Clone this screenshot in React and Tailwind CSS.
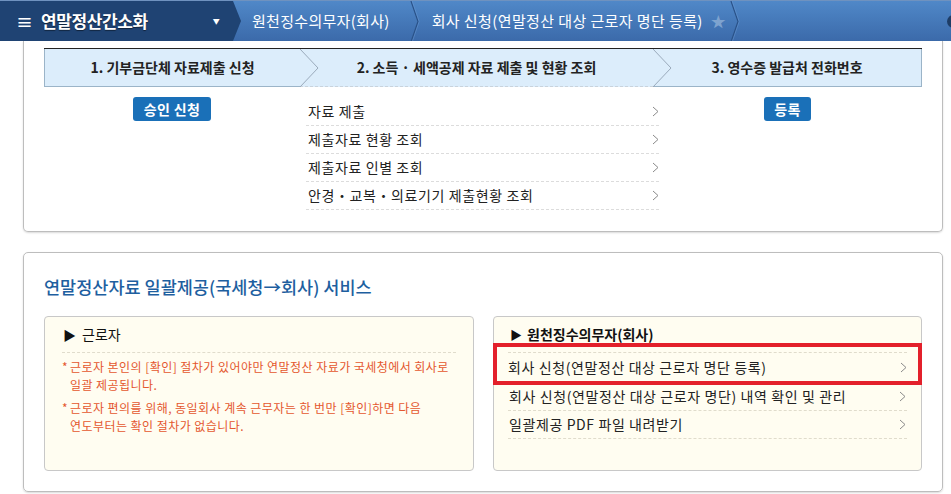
import React from "react";

const KR = { fontFamily: "'Noto Sans CJK KR', 'Noto Sans', sans-serif" };

const Chev = ({ className = "" }) => (
  <svg width="7" height="11" viewBox="0 0 7 11" className={className}>
    <path d="M1 1 L6 5.5 L1 10" fill="none" stroke="#8a8a8a" strokeWidth="1" />
  </svg>
);

const Sep = () => (
  <svg width="10" height="41" viewBox="0 0 10 41" className="shrink-0">
    <path d="M1 0 L8 20.5 L1 41" fill="none" stroke="#2a5288" strokeWidth="1.2" />
    <path d="M2.2 0 L9.2 20.5 L2.2 41" fill="none" stroke="#6b9ad3" strokeWidth="0.8" opacity="0.6" />
  </svg>
);

function TopBar() {
  return (
    <div className="h-[41px] flex items-stretch overflow-hidden border-t border-[#6f92bf] bg-gradient-to-b from-[#5088c8] to-[#3b6aaa]">
      <div className="w-[242px] shrink-0 flex items-center bg-[#1f4373] [clip-path:polygon(0_0,233px_0,241px_50%,233px_100%,0_100%)]">
        <span className="ml-[16px] text-white text-[17px] font-bold leading-none">≡</span>
        <span className="ml-[8px] text-white text-[17px] font-bold tracking-[-0.4px] [text-shadow:0_1px_1px_rgba(0,0,0,0.5)]">연말정산간소화</span>
        <span className="ml-[65px] text-white text-[7px]">▼</span>
      </div>
      <div className="flex items-center ml-[10px] text-[15px] tracking-[0.3px] text-white">원천징수의무자(회사)</div>
      <div className="ml-[20px] flex items-center"><Sep /></div>
      <div className="flex items-center ml-[12px] text-[15px] tracking-[0.4px] text-white">회사 신청(연말정산 대상 근로자 명단 등록)</div>
      <div className="flex items-center ml-[8px] text-[#7ea3cf] text-[15px]">★</div>
      <div className="ml-[4px] flex items-center"><Sep /></div>
      <div className="flex-1" />
      <div className="flex items-center mr-[-9px]">
        <div className="w-[13px] h-[13px] rounded-full bg-[#1e3d66]" />
      </div>
    </div>
  );
}

function StepHeader() {
  return (
    <div className="flex h-[39px] bg-[#dcedfb] border-t border-[#222]">
      <div className="w-[256px] flex items-center justify-center text-[14px] font-bold text-[#222] border-b border-l border-[#9bb4c8]">
        1. 기부금단체 자료제출 신청
      </div>
      <svg width="19" height="38" viewBox="0 0 19 38" className="shrink-0 -mr-[19px] relative z-10">
        <path d="M0 0 L18 19 L0 38" fill="none" stroke="#9aaabb" strokeWidth="1" />
      </svg>
      <div className="w-[353px] flex items-center justify-center text-[14px] font-bold text-[#222] border-b border-dashed border-[#c9d3dc]">
        2. 소득 · 세액공제 자료 제출 및 현황 조회
      </div>
      <svg width="19" height="38" viewBox="0 0 19 38" className="shrink-0 -mr-[19px] relative z-10">
        <path d="M0 0 L18 19 L0 38" fill="none" stroke="#9aaabb" strokeWidth="1" />
      </svg>
      <div className="flex-1 flex items-center justify-center text-[14px] font-bold text-[#222] border-b border-r border-[#9bb4c8]">
        3. 영수증 발급처 전화번호
      </div>
    </div>
  );
}

const listItems = ["자료 제출", "제출자료 현황 조회", "제출자료 인별 조회", "안경・교복・의료기기 제출현황 조회"];

function Card1() {
  return (
    <div className="ml-[23px] mr-[8px] h-[191px] border-x border-b border-[#bdbdbd] rounded-b-[5px] shadow-[0_1px_2px_rgba(0,0,0,0.15)] px-[20px] pt-[7px]">
      <StepHeader />
      <div className="flex">
        <div className="w-[256px] flex justify-center pt-[10px]">
          <div className="h-[24px] px-[11px] flex items-center rounded-[3px] bg-[#1a70b8] text-white text-[14px] font-bold tracking-[0.4px]">승인 신청</div>
        </div>
        <div className="w-[353px] pl-[6px] pt-[11px]">
          {listItems.map((t) => (
            <div key={t} className="h-[28px] flex items-center justify-between border-b border-dashed border-[#dcdcdc] text-[14px] text-[#222] pl-[2px] -mr-[6px]">
              <span className="tracking-[0.6px]">{t}</span>
              <Chev />
            </div>
          ))}
        </div>
        <div className="flex-1 flex justify-center pt-[10px]">
          <div className="h-[24px] px-[10px] flex items-center rounded-[3px] bg-[#1a70b8] text-white text-[14px] font-bold tracking-[0.4px]">등록</div>
        </div>
      </div>
    </div>
  );
}

const companyItems = [
  "회사 신청(연말정산 대상 근로자 명단 등록)",
  "회사 신청(연말정산 대상 근로자 명단) 내역 확인 및 관리",
  "일괄제공 PDF 파일 내려받기",
];

function Card2() {
  return (
    <div className="ml-[23px] mr-[8px] mt-[20px] h-[240px] border border-[#bdbdbd] rounded-[5px] shadow-[0_1px_2px_rgba(0,0,0,0.15)] px-[20px]">
      <div className="pt-[21px] h-[63px] text-[17.5px] text-[#1e5f9f] font-medium">
        연말정산자료 일괄제공(국세청→회사) 서비스
      </div>
      <div className="flex gap-[19px]">
        <div className="w-[430px] h-[155px] bg-[#fffdf1] border border-[#c8c8c8] rounded-[4px] px-[17px]">
          <div className="h-[36px] flex items-center pl-[1px] border-b border-dashed border-[#e0dccc] text-[14px] text-[#111]">
            <span className="text-[13px] mr-[6px]">▶</span>근로자
          </div>
          <div className="pt-[5px] text-[12px] leading-[17.5px] tracking-[0.45px] text-[#e4572e]">
            <div className="flex mb-[6px]"><span className="w-[8px] shrink-0">*</span><span>근로자 본인의 [확인] 절차가 있어야만 연말정산 자료가 국세청에서 회사로<br />일괄 제공됩니다.</span></div>
            <div className="flex"><span className="w-[8px] shrink-0">*</span><span>근로자 편의를 위해, 동일회사 계속 근무자는 한 번만 [확인]하면 다음<br />연도부터는 확인 절차가 없습니다.</span></div>
          </div>
        </div>
        <div className="flex-1 h-[155px] bg-[#fffdf1] border border-[#c8c8c8] rounded-[4px]">
          <div className="mx-[14px] h-[36px] flex items-center pl-[2px] border-b border-dashed border-[#e0dccc] text-[14px] font-bold text-[#111]">
            <span className="text-[12px] mr-[5px]">▶</span>원천징수의무자(회사)
          </div>
          {companyItems.map((t, i) => (
            <div key={t} className={i === 0 ? "-mt-[10px] -mx-[1px] border-[4px] border-[#e3202b] h-[42px] flex" : i === 1 ? "mx-[14px] -mt-[2px]" : "mx-[14px]"}>
              <div className={(i === 0 ? "flex-1 mx-[10px]" : "border-b border-dashed border-[#e0dccc]") + " h-[28px] self-end flex items-center justify-between text-[14px] text-[#222]"}>
                <span className="tracking-[0.6px] pl-[1px]">{t}</span>
                <Chev className="mr-[1px]" />
              </div>
            </div>
          ))}
        </div>
      </div>
    </div>
  );
}

export default function App() {
  return (
    <div className="w-[951px] h-[494px] bg-white overflow-hidden" style={KR}>
      <TopBar />
      <Card1 />
      <Card2 />
    </div>
  );
}
